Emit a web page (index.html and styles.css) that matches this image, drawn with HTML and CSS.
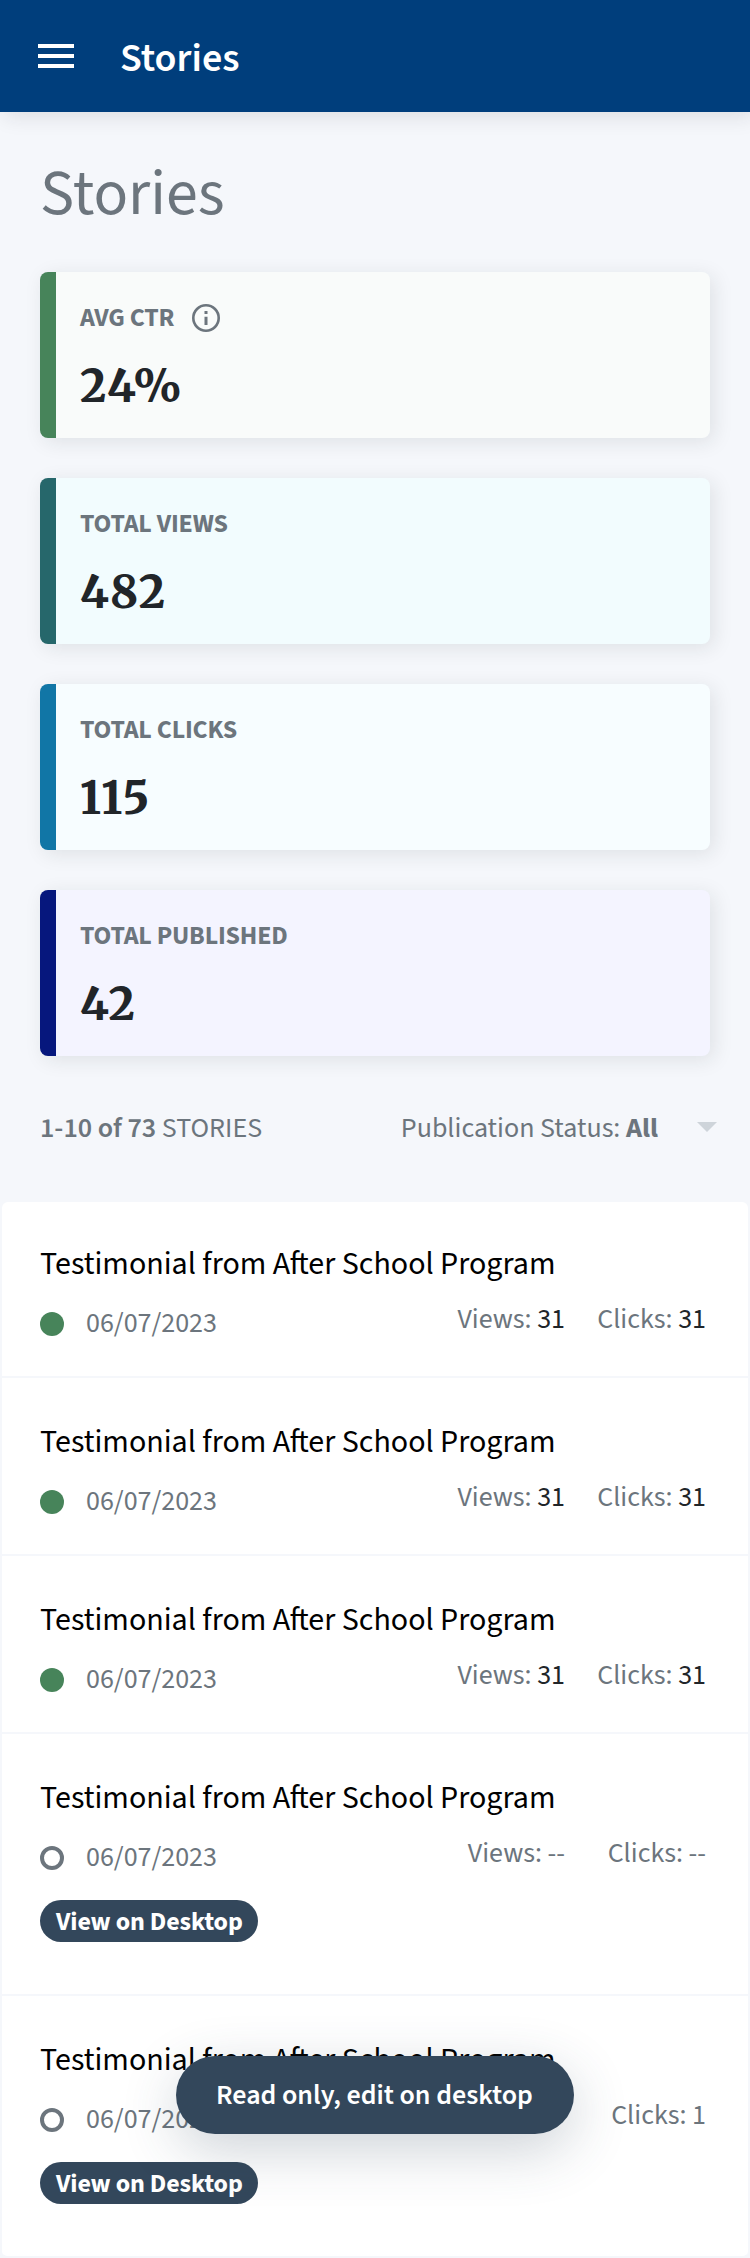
FILE: index.html
```html
<!DOCTYPE html>
<html lang="en">
<head>
<meta charset="utf-8">
<title>Stories</title>
<link rel="stylesheet" href="styles.css">
</head>
<body>
<header class="topbar">
  <svg class="menu-icon" width="36" height="24" viewBox="0 0 36 24"><path fill="#fff" d="M0 0h36v4H0zM0 10h36v4H0zM0 20h36v4H0z"/></svg>
  <span class="topbar-title">Stories</span>
</header>
<main>
  <h1 class="page-title">Stories</h1>
  <section class="stats">
    <div class="stat stat-ctr">
      <div class="stat-label"><span>AVG CTR</span>
        <svg class="info-icon" width="28" height="28" viewBox="0 0 28 28"><circle cx="14" cy="14" r="12.7" fill="none" stroke="#6c757d" stroke-width="2.6"/><path fill="#6c757d" d="M12.5 7h3v3h-3zM12.5 12.7h3V21h-3z"/></svg>
      </div>
      <div class="stat-value">24%</div>
    </div>
    <div class="stat stat-views"><div class="stat-label">TOTAL VIEWS</div><div class="stat-value">482</div></div>
    <div class="stat stat-clicks"><div class="stat-label">TOTAL CLICKS</div><div class="stat-value">115</div></div>
    <div class="stat stat-published"><div class="stat-label">TOTAL PUBLISHED</div><div class="stat-value">42</div></div>
  </section>
  <div class="filters">
    <div class="count"><b>1-10 of 73</b> STORIES</div>
    <div class="status"><span>Publication Status: <strong>All</strong></span>
      <svg class="caret" width="20" height="10" viewBox="0 0 20 10"><path fill="#ced4da" d="M0 0h20L10 10z"/></svg>
    </div>
  </div>
  <section class="list">
    <article class="story">
      <h2 class="story-title">Testimonial from After School Program</h2>
      <div class="meta"><i class="dot"></i><span class="date">06/07/2023</span><span class="metric">Views: <em>31</em></span><span class="metric">Clicks: <em>31</em></span></div>
    </article>
    <article class="story">
      <h2 class="story-title">Testimonial from After School Program</h2>
      <div class="meta"><i class="dot"></i><span class="date">06/07/2023</span><span class="metric">Views: <em>31</em></span><span class="metric">Clicks: <em>31</em></span></div>
    </article>
    <article class="story">
      <h2 class="story-title">Testimonial from After School Program</h2>
      <div class="meta"><i class="dot"></i><span class="date">06/07/2023</span><span class="metric">Views: <em>31</em></span><span class="metric">Clicks: <em>31</em></span></div>
    </article>
    <article class="story draft">
      <h2 class="story-title">Testimonial from After School Program</h2>
      <div class="meta"><i class="dot"></i><span class="date">06/07/2023</span><span class="metric">Views: --</span><span class="metric">Clicks: --</span></div>
      <span class="badge">View on Desktop</span>
    </article>
    <article class="story draft">
      <h2 class="story-title">Testimonial from After School Program</h2>
      <div class="meta"><i class="dot"></i><span class="date">06/07/2023</span><span class="metric"></span><span class="metric">Clicks: 1</span></div>
      <span class="badge">View on Desktop</span>
    </article>
  </section>
</main>
<div class="toast">Read only, edit on desktop</div>
</body>
</html>
```
FILE: styles.css
```css
* { box-sizing: border-box; }
body {
  position: relative;
  margin: 0;
  height: 2258px;
  background: #f5f7fb;
  color: #6c757d;
  font-family: "Source Sans 3", "Noto Sans CJK SC", sans-serif;
  font-size: 28px;
  white-space: nowrap;
}
.topbar {
  display: flex;
  align-items: center;
  height: 112px;
  padding: 0 38px 0 38px;
  background: #003e7c;
  box-shadow: 4px 4px 20px rgba(33, 37, 41, .12);
}
.topbar-title {
  margin-left: 46px;
  padding-top: 6px;
  color: #fff;
  font-size: 40px;
  font-weight: 600;
  line-height: 50px;
}
.page-title {
  margin: 53px 40px 49px;
  font-size: 64px;
  font-weight: 400;
  line-height: 58px;
}
.stats {
  display: flex;
  flex-direction: column;
  gap: 40px;
  padding: 0 40px;
}
.stat {
  height: 166px;
  padding: 30px 24px 0;
  border-left: 16px solid;
  border-radius: 8px;
  box-shadow: 4px 4px 20px rgba(33, 37, 41, .1);
}
.stat-ctr { border-color: #47845a; background: #f9fbfa; }
.stat-views { border-color: #26676b; background: #f2fcfe; }
.stat-clicks { border-color: #1176a6; background: #f7fdff; }
.stat-published { border-color: #06177d; background: #f4f4ff; }
.stat-label {
  display: flex;
  align-items: center;
  gap: 18px;
  height: 32px;
  font-size: 26px;
  font-weight: 700;
  letter-spacing: -.18px;
  line-height: 32px;
}
.stat-value {
  margin-top: 28px;
  color: #212529;
  font-family: Merriweather, "DejaVu Serif Condensed", "DejaVu Serif", serif;
  font-size: 45px;
  font-weight: 850;
  letter-spacing: 1.4px;
  line-height: 48px;
}
.filters {
  display: flex;
  justify-content: space-between;
  margin: 52px 33px 52px 40px;
  line-height: 40px;
}
.count b { font-weight: 600; }
.status { display: flex; align-items: center; gap: 39px; }
.caret { margin-bottom: 2px; }
.list { padding: 2px 2px 2px; }
.story {
  height: 178px;
  padding: 44px 42px 0 38px;
  border-bottom: 2px solid #f5f7fb;
  background: #fff;
}
.story:first-child { height: 176px; padding-top: 42px; border-radius: 6px 6px 0 0; }
.story.draft { height: 262px; }
.story:last-child { border-radius: 0 0 6px 6px; }
.story-title {
  margin: 0;
  color: #000;
  font-size: 32px;
  font-weight: 400;
  line-height: 40px;
}
.meta {
  display: grid;
  grid-template-columns: 46px 1fr 140px 141px;
  margin-top: 15px;
  height: 50px;
  line-height: 40px;
}
.dot {
  width: 24px;
  height: 24px;
  margin-top: 13px;
  border-radius: 50%;
  background: #47845a;
}
.draft .dot { border: 4px solid #6c757d; background: none; }
.date { padding-top: 4px; }
.metric { text-align: right; }
.metric em { color: #212529; font-style: normal; }
.badge {
  display: block;
  width: 218px;
  height: 42px;
  margin-top: 17px;
  padding-left: 16px;
  border-radius: 21px;
  background: #33475b;
  color: #fff;
  font-size: 26px;
  font-weight: 700;
  letter-spacing: -.12px;
  line-height: 43px;
}
.toast {
  position: absolute;
  top: 2056px;
  left: 176px;
  width: 398px;
  height: 78px;
  padding-left: 40px;
  border-radius: 39px;
  background: #33475b;
  box-shadow: 0 16px 56px rgba(51, 71, 91, .24);
  color: #fff;
  font-weight: 600;
  line-height: 78px;
}
```
